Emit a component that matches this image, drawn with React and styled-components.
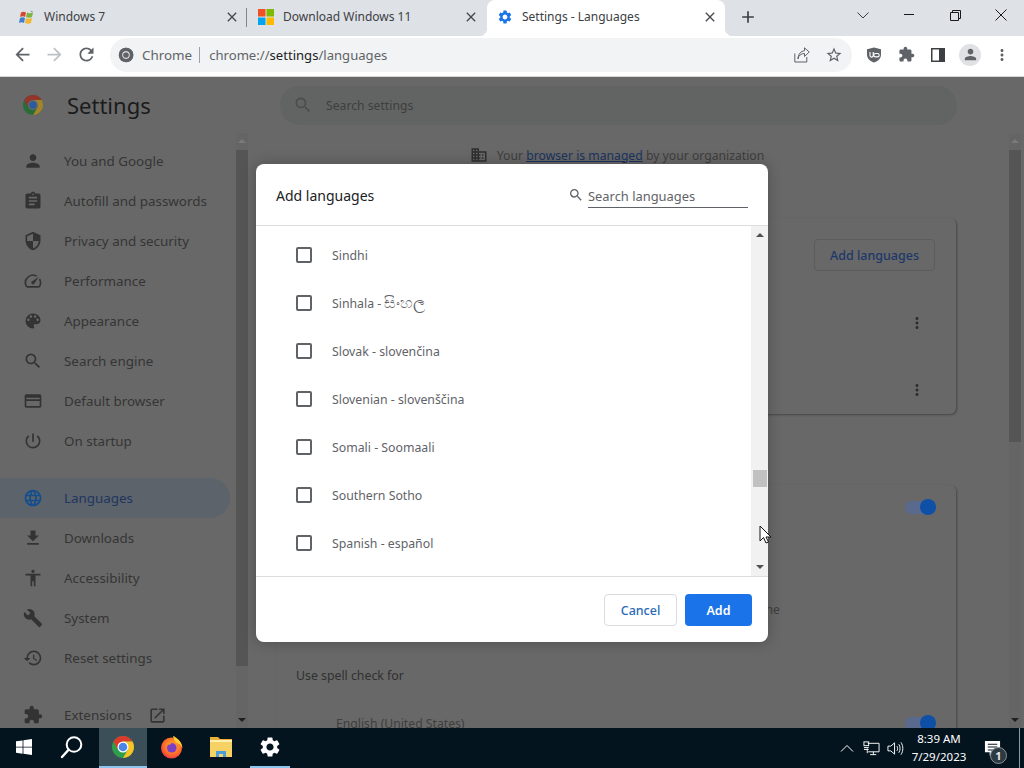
import React from "react";
import styled, { createGlobalStyle } from "styled-components";

const FONT = `"Noto Sans", "Open Sans", "Liberation Sans", sans-serif`;

const Global = createGlobalStyle`
  html, body { margin: 0; padding: 0; width: 1024px; height: 768px; overflow: hidden; background: #686868; }
  * { box-sizing: border-box; }
  body { font-family: ${FONT}; }
`;

const P = {
  person: "M12 12c2.21 0 4-1.79 4-4s-1.79-4-4-4-4 1.79-4 4 1.79 4 4 4zm0 2c-2.67 0-8 1.34-8 4v2h16v-2c0-2.66-5.33-4-8-4z",
  assignment: "M19 3h-4.18C14.4 1.84 13.3 1 12 1c-1.3 0-2.4.84-2.82 2H5c-1.1 0-2 .9-2 2v14c0 1.1.9 2 2 2h14c1.1 0 2-.9 2-2V5c0-1.1-.9-2-2-2zm-7 0c.55 0 1 .45 1 1s-.45 1-1 1-1-.45-1-1 .45-1 1-1zm2 14H7v-2h7v2zm3-4H7v-2h10v2zm0-4H7V7h10v2z",
  security: "M12 1L3 5v6c0 5.55 3.84 10.74 9 12 5.16-1.26 9-6.45 9-12V5l-9-4zm0 10.99h7c-.53 4.12-3.28 7.79-7 8.94V12H5V6.3l7-3.11v8.8z",
  speed: "M20.38 8.57l-1.23 1.85a8 8 0 0 1-.22 7.58H5.07A8 8 0 0 1 15.58 6.85l1.85-1.23A10 10 0 0 0 3.35 19a2 2 0 0 0 1.72 1h13.85a2 2 0 0 0 1.74-1 10 10 0 0 0-.27-10.44zm-9.79 6.84a2 2 0 0 0 2.83 0l5.66-8.49-8.49 5.66a2 2 0 0 0 0 2.83z",
  palette: "M12 3a9 9 0 0 0 0 18c.83 0 1.5-.67 1.5-1.5 0-.39-.15-.74-.39-1.01-.23-.26-.38-.61-.38-.99 0-.83.67-1.5 1.5-1.5H16c2.76 0 5-2.24 5-5 0-4.42-4.03-8-9-8zm-5.5 9c-.83 0-1.5-.67-1.5-1.5S5.67 9 6.5 9 8 9.67 8 10.5 7.33 12 6.5 12zm3-4C8.67 8 8 7.33 8 6.5S8.67 5 9.5 5s1.5.67 1.5 1.5S10.33 8 9.5 8zm5 0c-.83 0-1.5-.67-1.5-1.5S13.67 5 14.5 5s1.5.67 1.5 1.5S15.33 8 14.5 8zm3 4c-.83 0-1.5-.67-1.5-1.5S16.67 9 17.5 9s1.5.67 1.5 1.5-.67 1.5-1.5 1.5z",
  search: "M15.5 14h-.79l-.28-.27A6.471 6.471 0 0 0 16 9.5 6.5 6.5 0 1 0 9.5 16c1.61 0 3.09-.59 4.23-1.57l.27.28v.79l5 4.99L20.49 19l-4.99-5zm-6 0C7.01 14 5 11.99 5 9.5S7.01 5 9.5 5 14 7.01 14 9.5 11.99 14 9.5 14z",
  browser: "M20 4H4c-1.1 0-2 .9-2 2v12c0 1.1.9 2 2 2h16c1.1 0 2-.9 2-2V6c0-1.1-.9-2-2-2zm0 14H4v-6h16v6zm0-8H4V8h16v2z",
  power: "M13 3h-2v10h2V3zm4.83 2.17l-1.42 1.42A6.92 6.92 0 0 1 19 12c0 3.87-3.13 7-7 7A6.995 6.995 0 0 1 7.58 6.58L6.17 5.17A8.932 8.932 0 0 0 3 12a9 9 0 0 0 18 0c0-2.74-1.23-5.18-3.17-6.83z",
  language: "M11.99 2C6.47 2 2 6.48 2 12s4.47 10 9.99 10C17.52 22 22 17.52 22 12S17.52 2 11.99 2zm6.93 6h-2.95a15.65 15.65 0 0 0-1.38-3.56A8.03 8.03 0 0 1 18.92 8zM12 4.04c.83 1.2 1.48 2.53 1.91 3.96h-3.82c.43-1.43 1.08-2.76 1.91-3.96zM4.26 14C4.1 13.36 4 12.69 4 12s.1-1.36.26-2h3.38c-.08.66-.14 1.32-.14 2 0 .68.06 1.34.14 2H4.26zm.82 2h2.95c.32 1.25.78 2.45 1.38 3.56A7.987 7.987 0 0 1 5.08 16zm2.95-8H5.08a7.987 7.987 0 0 1 4.33-3.56A15.65 15.65 0 0 0 8.03 8zM12 19.96c-.83-1.2-1.48-2.53-1.91-3.96h3.82c-.43 1.43-1.08 2.76-1.91 3.96zM14.34 14H9.66c-.09-.66-.16-1.32-.16-2 0-.68.07-1.35.16-2h4.68c.09.65.16 1.32.16 2 0 .68-.07 1.34-.16 2zm.25 5.56c.6-1.11 1.06-2.31 1.38-3.56h2.95a8.03 8.03 0 0 1-4.33 3.56zM16.36 14c.08-.66.14-1.32.14-2 0-.68-.06-1.34-.14-2h3.38c.16.64.26 1.31.26 2s-.1 1.36-.26 2h-3.38z",
  download: "M19 9h-4V3H9v6H5l7 7 7-7zM5 18v2h14v-2H5z",
  accessibility: "M12 2c1.1 0 2 .9 2 2s-.9 2-2 2-2-.9-2-2 .9-2 2-2zm9 7h-6v13h-2v-6h-2v6H9V9H3V7h18v2z",
  build: "M22.7 19l-9.1-9.1c.9-2.3.4-5-1.5-6.9-2-2-5-2.4-7.4-1.3L9 6 6 9 1.6 4.7C.4 7.1.9 10.1 2.9 12.1c1.9 1.9 4.6 2.4 6.9 1.5l9.1 9.1c.4.4 1 .4 1.4 0l2.3-2.3c.5-.4.5-1.1.1-1.4z",
  restore: "M13 3a9 9 0 0 0-9 9H1l3.89 3.89.07.14L9 12H6c0-3.87 3.13-7 7-7s7 3.13 7 7-3.13 7-7 7c-1.93 0-3.68-.79-4.94-2.06l-1.42 1.42A8.954 8.954 0 0 0 13 21a9 9 0 0 0 0-18zm-1 5v5l4.28 2.54.72-1.21-3.5-2.08V8H12z",
  extension: "M20.5 11H19V7c0-1.1-.9-2-2-2h-4V3.5C13 2.12 11.88 1 10.5 1S8 2.12 8 3.5V5H4c-1.1 0-1.99.9-1.99 2v3.8H3.5c1.49 0 2.7 1.21 2.7 2.7s-1.21 2.7-2.7 2.7H2V20c0 1.1.9 2 2 2h3.8v-1.5c0-1.49 1.21-2.7 2.7-2.7 1.49 0 2.7 1.21 2.7 2.7V22H17c1.1 0 2-.9 2-2v-4h1.5c1.38 0 2.5-1.12 2.5-2.5S21.88 11 20.5 11z",
  open: "M19 19H5V5h7V3H5a2 2 0 0 0-2 2v14a2 2 0 0 0 2 2h14c1.1 0 2-.9 2-2v-7h-2v7zM14 3v2h3.59l-9.83 9.83 1.41 1.41L19 6.41V10h2V3h-7z",
  business: "M12 7V3H2v18h20V7H12zM6 19H4v-2h2v2zm0-4H4v-2h2v2zm0-4H4V9h2v2zm0-4H4V5h2v2zm4 12H8v-2h2v2zm0-4H8v-2h2v2zm0-4H8V9h2v2zm0-4H8V5h2v2zm10 12h-8v-2h2v-2h-2v-2h2v-2h-2V9h8v10zm-2-8h-2v2h2v-2zm0 4h-2v2h2v-2z",
  gear: "M19.14 12.94c.04-.3.06-.61.06-.94 0-.32-.02-.64-.07-.94l2.03-1.58a.49.49 0 0 0 .12-.61l-1.92-3.32a.488.488 0 0 0-.59-.22l-2.39.96c-.5-.38-1.03-.7-1.62-.94l-.36-2.54a.484.484 0 0 0-.48-.41h-3.84c-.24 0-.43.17-.47.41l-.36 2.54c-.59.24-1.13.57-1.62.94l-2.39-.96c-.22-.08-.47 0-.59.22L2.74 8.87c-.12.21-.08.47.12.61l2.03 1.58c-.05.3-.09.63-.09.94s.02.64.07.94l-2.03 1.58a.49.49 0 0 0-.12.61l1.92 3.32c.12.22.37.29.59.22l2.39-.96c.5.38 1.03.7 1.62.94l.36 2.54c.05.24.24.41.48.41h3.84c.24 0 .44-.17.47-.41l.36-2.54c.59-.24 1.13-.56 1.62-.94l2.39.96c.22.08.47 0 .59-.22l1.92-3.32c.12-.22.07-.47-.12-.61l-2.01-1.58zM12 15.6c-1.98 0-3.6-1.62-3.6-3.6s1.62-3.6 3.6-3.6 3.6 1.62 3.6 3.6-1.62 3.6-3.6 3.6z",
  dots: "M12 8c1.1 0 2-.9 2-2s-.9-2-2-2-2 .9-2 2 .9 2 2 2zm0 2c-1.1 0-2 .9-2 2s.9 2 2 2 2-.9 2-2-.9-2-2-2zm0 6c-1.1 0-2 .9-2 2s.9 2 2 2 2-.9 2-2-.9-2-2-2z",
  back: "M20 11H7.83l5.59-5.59L12 4l-8 8 8 8 1.41-1.41L7.83 13H20v-2z",
  forward: "M12 4l-1.41 1.41L16.17 11H4v2h12.17l-5.58 5.59L12 20l8-8z",
  reload: "M17.65 6.35A7.958 7.958 0 0 0 12 4c-4.42 0-7.99 3.58-7.99 8s3.57 8 7.99 8c3.73 0 6.84-2.55 7.73-6h-2.08A5.99 5.99 0 0 1 12 18c-3.31 0-6-2.69-6-6s2.69-6 6-6c1.66 0 3.14.69 4.22 1.78L13 11h7V4l-2.35 2.35z",
  close: "M19 6.41L17.59 5 12 10.59 6.41 5 5 6.41 10.59 12 5 17.59 6.41 19 12 13.41 17.59 19 19 17.59 13.41 12z",
  plus: "M19 13h-6v6h-2v-6H5v-2h6V5h2v6h6v2z",
  star: "M22 9.24l-7.19-.62L12 2 9.19 8.63 2 9.24l5.46 4.73L5.82 21 12 17.27 18.18 21l-1.63-7.03L22 9.24zM12 15.4l-3.76 2.27 1-4.28-3.32-2.88 4.38-.38L12 6.1l1.71 4.04 4.38.38-3.32 2.88 1 4.28L12 15.4z",
};

const Svg = styled.svg`
  display: block;
  flex: none;
  width: ${(p) => p.$size || 20}px;
  height: ${(p) => p.$size || 20}px;
  fill: ${(p) => p.$color || "#333"};
`;
const Icon = ({ name, size, color }) => (
  <Svg viewBox="0 0 24 24" $size={size} $color={color}><path d={P[name]} /></Svg>
);

const ChromeLogo = ({ size, mono }) => (
  <Svg viewBox="0 0 48 48" $size={size} $color="none">
    <circle cx="24" cy="24" r="22" fill={mono ? "#5f6368" : "#2f9e4a"} />
    <path d="M24 13H43.05A22 22 0 0 0 4.95 13L14 29Z" fill={mono ? "#5f6368" : "#dd3a2e"} />
    <path d="M24 13H43.05A22 22 0 0 1 24 46L34 29Z" fill={mono ? "#5f6368" : "#f7c325"} />
    <circle cx="24" cy="24" r="11" fill="#fff" />
    <circle cx="24" cy="24" r="8.6" fill={mono ? "#5f6368" : "#4a86e8"} />
  </Svg>
);

const DimChromeLogo = () => (
  <Svg viewBox="0 0 48 48" $size={22} $color="none">
    <circle cx="24" cy="24" r="22" fill="#2a6b3a" />
    <path d="M24 13H43.05A22 22 0 0 0 4.95 13L14 29Z" fill="#93352c" />
    <path d="M24 13H43.05A22 22 0 0 1 24 46L34 29Z" fill="#a3842a" />
    <circle cx="24" cy="24" r="11" fill="#6a6a6a" />
    <circle cx="24" cy="24" r="8" fill="#2b5a9e" />
  </Svg>
);

const Root = styled.div`
  width: 1024px;
  height: 768px;
  display: flex;
  flex-direction: column;
  overflow: hidden;
  position: relative;
`;

/* ---------- tab strip ---------- */
const TabStrip = styled.div`
  height: 36px;
  flex: none;
  display: flex;
  background: #dee1e6;
  padding-left: 10px;
`;
const Tab = styled.div`
  position: relative;
  width: ${(p) => p.$w}px;
  padding: 0 ${(p) => p.$padR}px 3px ${(p) => p.$pad}px;
  display: flex;
  align-items: center;
  gap: 9px;
  background: ${(p) => (p.$active ? "#fff" : "transparent")};
  border-radius: 8px 8px 0 0;
  ${(p) =>
    p.$active &&
    `
    &::before, &::after { content: ""; position: absolute; bottom: 0; width: 8px; height: 8px; }
    &::before { left: -8px; background: radial-gradient(circle at 0 0, transparent 8px, #fff 8.5px); }
    &::after { right: -8px; background: radial-gradient(circle at 100% 0, transparent 8px, #fff 8.5px); }
  `}
`;
const TabSep = styled.div`
  position: absolute;
  right: 0;
  top: 8px;
  height: 19px;
  width: 1px;
  background: #80868b;
`;
const TabTitle = styled.span`
  flex: 1;
  font-size: 12px;
  color: #3c4043;
  white-space: nowrap;
`;
const NewTab = styled.div`
  width: 28px;
  height: 34px;
  margin-left: 9px;
  display: flex;
  align-items: center;
  justify-content: center;
`;
const Spacer = styled.div`
  flex: 1;
`;
const WinButton = styled.div`
  width: 46px;
  height: 30px;
  display: flex;
  align-items: center;
  justify-content: center;
`;

/* ---------- toolbar ---------- */
const Toolbar = styled.div`
  height: 41px;
  flex: none;
  display: flex;
  align-items: center;
  background: #fff;
  padding: 0 6px 3px;
  border-bottom: 1px solid #d5d6d8;
`;
const ToolButton = styled.div`
  width: 32px;
  height: 32px;
  flex: none;
  display: flex;
  align-items: center;
  justify-content: center;
`;
const Omnibox = styled.div`
  flex: 1;
  height: 34px;
  margin: 0 6px 0 8px;
  padding: 0 2px 0 8px;
  border-radius: 17px;
  background: #f1f3f4;
  display: flex;
  align-items: center;
`;
const Origin = styled.span`
  margin-left: 8px;
  font-size: 13.4px;
  color: #5f6368;
`;
const OmniDivider = styled.span`
  width: 1px;
  height: 16px;
  background: #9aa0a6;
  margin: 0 9px 0 7px;
`;
const Url = styled.span`
  flex: 1;
  font-size: 13.1px;
  color: #5f6368;
  b { font-weight: 400; color: #202124; }
`;
const Avatar = styled.div`
  width: 22px;
  height: 22px;
  border-radius: 50%;
  background: #dfe1e5;
  display: flex;
  align-items: center;
  justify-content: center;
`;

/* ---------- dimmed settings page ---------- */
const Page = styled.div`
  flex: 1;
  min-height: 0;
  position: relative;
  display: flex;
  flex-direction: column;
  background: #686868;
  overflow: hidden;
`;
const Header = styled.div`
  height: 56px;
  flex: none;
  display: flex;
  align-items: center;
  padding-left: 22px;
`;
const HeaderTitle = styled.div`
  width: 213px;
  margin-left: 23px;
  font-size: 22px;
  color: #1b1b1b;
  line-height: 1;
`;
const SearchBar = styled.div`
  width: 677px;
  height: 39px;
  border-radius: 20px;
  background: #626464;
  display: flex;
  align-items: center;
  padding-left: 13px;
  gap: 13px;
  font-size: 12.2px;
  color: #3e3e3e;
`;
const Body = styled.div`
  flex: 1;
  min-height: 0;
  display: flex;
`;
const Sidebar = styled.nav`
  width: 236px;
  flex: none;
  padding-top: 8px;
`;
const NavGroup = styled.div`
  margin-bottom: 17px;
`;
const NavItem = styled.div`
  height: 40px;
  width: 230px;
  display: flex;
  align-items: center;
  padding-left: 23px;
  gap: 21px;
  font-size: 13.4px;
  white-space: nowrap;
  color: ${(p) => (p.$active ? "#1d3660" : "#353535")};
  background: ${(p) => (p.$active ? "#5d636b" : "transparent")};
  border-radius: 0 20px 20px 0;
`;
const NavExternal = styled.span`
  margin-left: -5px;
  display: flex;
`;
const Scrollbar = styled.div`
  width: ${(p) => p.$w}px;
  flex: none;
  display: flex;
  flex-direction: column;
  align-items: center;
  padding-top: ${(p) => p.$top}px;
  background: ${(p) => p.$bg || "#656565"};
`;
const ScrollGutter = styled.div`
  width: 3px;
  flex: none;
`;
const ArrowUp = styled.div`
  width: 0;
  height: 0;
  border-left: 4px solid transparent;
  border-right: 4px solid transparent;
  border-bottom: 4px solid ${(p) => p.$c};
`;
const ArrowDown = styled.div`
  width: 0;
  height: 0;
  border-left: 4px solid transparent;
  border-right: 4px solid transparent;
  border-top: 4px solid ${(p) => p.$c};
  margin-top: auto;
  margin-bottom: ${(p) => p.$mb}px;
`;
const Thumb = styled.div`
  width: ${(p) => (p.$w ? `${p.$w}px` : "100%")};
  margin-top: ${(p) => p.$gap}px;
  height: ${(p) => p.$h}px;
  background: ${(p) => p.$c};
`;
const Main = styled.main`
  flex: 1;
  min-width: 0;
  padding-left: 28px;
  overflow: hidden;
`;
const Column = styled.div`
  width: 680px;
`;
const Managed = styled.div`
  height: 44px;
  display: flex;
  align-items: center;
  justify-content: center;
  padding-left: 2px;
  gap: 9px;
  font-size: 12.2px;
  color: #3e3e3e;
  a { color: #1b335f; text-decoration: underline; }
`;
const Card = styled.section`
  margin-top: ${(p) => p.$mt}px;
  height: ${(p) => p.$h}px;
  border-radius: 6px;
  background: #686868;
  box-shadow: 1px 1px 2px rgba(30, 30, 30, 0.45);
`;
const CardTop = styled.div`
  display: flex;
  justify-content: flex-end;
  padding: 21px 21px 18px 0;
`;
const OutlineButton = styled.div`
  width: 121px;
  height: 32px;
  border: 1px solid #5c5c5c;
  border-radius: 4px;
  display: flex;
  align-items: center;
  justify-content: center;
  font-size: 12.5px;
  font-weight: 500;
  color: #1d3868;
`;
const MenuRow = styled.div`
  height: 67px;
  display: flex;
  align-items: center;
  justify-content: flex-end;
  padding-right: 30px;
`;
const ToggleRow = styled.div`
  height: 44px;
  margin-top: ${(p) => p.$mt || 0}px;
  padding: 0 20px 0 ${(p) => p.$pl || 20}px;
  display: flex;
  align-items: center;
  font-size: 12.2px;
  color: #3e3e3e;
`;
const Track = styled.div`
  margin-left: auto;
  position: relative;
  width: 31px;
  height: 13px;
`;
const TrackBar = styled.div`
  width: 25px;
  height: 13px;
  border-radius: 7px;
  background: #5a6a8e;
`;
const Knob = styled.div`
  position: absolute;
  right: 0;
  top: -2px;
  width: 16px;
  height: 16px;
  border-radius: 50%;
  background: #0e50a6;
`;
const PeekLine = styled.div`
  margin-top: 71px;
  width: 504px;
  height: 20px;
  line-height: 20px;
  text-align: right;
  white-space: nowrap;
  font-size: 12.3px;
  color: #3e3e3e;
`;
const SpellLabel = styled.div`
  margin-top: 46px;
  padding-left: 20px;
  height: 20px;
  line-height: 20px;
  font-size: 12.3px;
  color: #303030;
`;

/* ---------- dialog ---------- */
const Dialog = styled.div`
  position: absolute;
  left: 256px;
  top: 87px;
  width: 512px;
  height: 478px;
  background: #fff;
  border-radius: 8px;
  box-shadow: 0 0 14px rgba(0, 0, 0, 0.25);
  display: flex;
  flex-direction: column;
  overflow: hidden;
`;
const DialogHead = styled.div`
  height: 62px;
  flex: none;
  display: flex;
  align-items: center;
  padding: 1px 20px 0;
  border-bottom: 1px solid #dadce0;
`;
const DialogTitle = styled.div`
  flex: 1;
  font-size: 14px;
  color: #202124;
`;
const DialogSearch = styled.div`
  display: flex;
  align-items: center;
  gap: 4px;
`;
const SearchField = styled.div`
  width: 160px;
  height: 23px;
  margin-top: 2px;
  line-height: 23px;
  border-bottom: 1px solid #5f6368;
  font-size: 12.9px;
  color: #5f6368;
`;
const DialogBody = styled.div`
  flex: 1;
  min-height: 0;
  display: flex;
`;
const LangList = styled.ul`
  flex: 1;
  margin: 0;
  padding: 5px 0 0 40px;
  list-style: none;
  overflow: hidden;
`;
const LangRow = styled.li`
  height: 48px;
  display: flex;
  align-items: center;
  gap: 20px;
  font-size: 12.3px;
  color: #5f6368;
`;
const Native = styled.span`
  font-size: 15.5px;
  line-height: 1;
`;
const Check = styled.span`
  width: 16px;
  height: 16px;
  flex: none;
  border: 2px solid #5f6368;
  border-radius: 2px;
`;
const DialogFoot = styled.div`
  height: 66px;
  flex: none;
  border-top: 1px solid #dadce0;
  display: flex;
  justify-content: flex-end;
  align-items: flex-start;
  gap: 8px;
  padding: 17px 16px 0 0;
`;
const DialogButton = styled.div`
  height: 32px;
  width: ${(p) => p.$w}px;
  border-radius: 4px;
  display: flex;
  align-items: center;
  justify-content: center;
  font-size: 12.5px;
  font-weight: ${(p) => (p.$primary ? 600 : 500)};
  color: ${(p) => (p.$primary ? "#fff" : "#2a6ab8")};
  background: ${(p) => (p.$primary ? "#1a73e8" : "#fff")};
  border: ${(p) => (p.$primary ? "none" : "1px solid #dadce0")};
`;
const Cursor = styled.svg`
  position: absolute;
  left: 759px;
  top: 525px;
  width: 13px;
  height: 20px;
`;

/* ---------- taskbar ---------- */
const Taskbar = styled.footer`
  height: 40px;
  flex: none;
  display: flex;
  align-items: stretch;
  background: #04141f;
`;
const TaskItem = styled.div`
  width: ${(p) => p.$w || 48}px;
  margin-left: ${(p) => p.$ml || 0}px;
  padding-right: ${(p) => p.$pr || 0}px;
  display: flex;
  align-items: center;
  justify-content: center;
  background: ${(p) => (p.$hi ? "#3a4f58" : "transparent")};
  border-bottom: 2px solid ${(p) => (p.$line ? "#8cc5ee" : "transparent")};
`;
const Tray = styled.div`
  margin-left: auto;
  display: flex;
  align-items: center;
  padding-right: 4px;
`;
const TrayIcon = styled.div`
  width: 24px;
  display: flex;
  justify-content: center;
`;
const Clock = styled.div`
  width: 64px;
  text-align: center;
  font-size: 11.5px;
  line-height: 18px;
  color: #fff;
  white-space: nowrap;
`;
const Notify = styled.div`
  position: relative;
  width: 30px;
  margin-left: 6px;
  margin-right: 12px;
  display: flex;
  justify-content: center;
`;
const Badge = styled.span`
  position: absolute;
  right: 0;
  top: 7px;
  width: 17px;
  height: 17px;
  border-radius: 50%;
  background: #2e3a42;
  border: 1px solid #8a9297;
  color: #e8e8e8;
  font-size: 11px;
  font-weight: 700;
  line-height: 15px;
  text-align: center;
`;
const EdgeLine = styled.div`
  width: 1px;
  height: 40px;
  background: #8a99a3;
`;

const NAV_A = [
  ["person", "You and Google"],
  ["assignment", "Autofill and passwords"],
  ["security", "Privacy and security"],
  ["speed", "Performance"],
  ["palette", "Appearance"],
  ["search", "Search engine"],
  ["browser", "Default browser"],
  ["power", "On startup"],
];
const NAV_B = [
  ["language", "Languages", true],
  ["download", "Downloads"],
  ["accessibility", "Accessibility"],
  ["build", "System"],
  ["restore", "Reset settings"],
];
const LANGS = [
  ["Sindhi"],
  ["Sinhala - ", "සිංහල"],
  ["Slovak - slovenčina"],
  ["Slovenian - slovenščina"],
  ["Somali - Soomaali"],
  ["Southern Sotho"],
  ["Spanish - español"],
];

const Win7Icon = () => (
  <Svg viewBox="0 0 16 16" $size={16} $color="none">
    <path d="M2 3.5c2-1.2 3.5-1 5 0L6 8C4.500 7 3 7 1 8z" fill="#d9472b" />
    <path d="M8 3.500c2 1 3.500 1 6 0L13 8c-2 1-3.500 1-6 0z" fill="#7cb342" />
    <path d="M1 9c2-1 3.500-1 5 0L5 14c-1.500-1-3-1-5 0z" fill="#3f7fd0" />
    <path d="M7 9c2 1 3.500 1 6 0l-1 5c-2 1-3.500 1-6 0z" fill="#f2b632" />
    <path d="M11 1.500l3 1-1 1z" fill="#8a8a8a" />
  </Svg>
);
const MsIcon = () => (
  <Svg viewBox="0 0 16 16" $size={16} $color="none">
    <rect width="7.500" height="7.500" fill="#f25022" />
    <rect x="8.500" width="7.500" height="7.500" fill="#7fba00" />
    <rect y="8.500" width="7.500" height="7.500" fill="#00a4ef" />
    <rect x="8.500" y="8.500" width="7.500" height="7.500" fill="#ffb900" />
  </Svg>
);
const ShareIcon = () => (
  <Svg viewBox="0 0 16 16" $size={16} $color="none">
    <path d="M.8 6.500v8.500h12V10" stroke="#5f6368" strokeWidth="1" fill="none" />
    <path d="M4 12c.4-3.500 3-5.500 6.500-5.500V9.500L15.200 5 10.500.8v3C7 4 4 7 4 12z" stroke="#5f6368" strokeWidth="1" fill="none" strokeLinejoin="round" />
  </Svg>
);
const UBlockIcon = () => (
  <Svg viewBox="0 0 16 16" $size={16} $color="none">
    <path d="M8 .5l7 1.800v5.200c0 4-3 6.800-7 8-4-1.200-7-4-7-8V2.300z" fill="#5f6368" />
    <path d="M4 5v3.500a1.600 1.600 0 0 0 3.200 0V5M9 6.500h2.500a1.700 1.700 0 0 1 0 3.400H9.500a1.700 1.700 0 0 1 0-3.400z" stroke="#fff" strokeWidth="1.100" fill="none" />
  </Svg>
);
const PanelIcon = () => (
  <Svg viewBox="0 0 16 16" $size={16} $color="none">
    <rect x="1" y="1" width="14" height="14" fill="#3c4043" />
    <rect x="2.500" y="2.500" width="6.500" height="11" fill="#fff" />
  </Svg>
);
const WindowsLogo = () => (
  <Svg viewBox="0 0 16 16" $size={16} $color="#fff">
    <path d="M0 2.300l6.600-.9v6.300H0zM7.400 1.300L16 0v7.700H7.400zM0 8.400h6.600v6.300L0 13.800zM7.400 8.400H16V16l-8.600-1.200z" />
  </Svg>
);
const SearchGlass = () => (
  <Svg viewBox="0 0 24 24" $size={24} $color="none">
    <circle cx="14" cy="9.500" r="7.300" stroke="#fff" strokeWidth="2" />
    <path d="M8.600 14.800L2 22" stroke="#fff" strokeWidth="2.400" strokeLinecap="round" />
  </Svg>
);
const Firefox = () => (
  <Svg viewBox="0 0 24 24" $size={24} $color="none">
    <defs>
      <radialGradient id="ffx" cx="0.55" cy="0.4" r="0.7">
        <stop offset="0" stopColor="#ffb224" />
        <stop offset="0.6" stopColor="#ff6a2b" />
        <stop offset="1" stopColor="#e3244f" />
      </radialGradient>
    </defs>
    <circle cx="11.500" cy="13" r="10.500" fill="url(#ffx)" />
    <path d="M13 .8c5 2.500 9 6.500 9.500 12.500-1.500-3-3.500-5-6.500-5.500C14.500 5.500 13.500 3.500 13 .8z" fill="#ffcb30" />
    <circle cx="11.800" cy="12.800" r="4.800" fill="#7b3fc4" />
    <path d="M6.500 9c2-2.500 5-3 7.500-2-2 .5-3.500 1.500-4 3z" fill="#ff8a2a" />
  </Svg>
);
const Folder = () => (
  <Svg viewBox="0 0 24 24" $size={24} $color="none">
    <path d="M1 2h8l2 2h12v5H1z" fill="#e8b13a" />
    <rect x="1" y="6" width="22" height="16" fill="#f6d264" />
    <rect x="1" y="5" width="22" height="2" fill="#fff0b0" />
    <path d="M7 22v-6h10v6h-3v-3h-4v3z" fill="#4a9fd8" />
  </Svg>
);
const Network = () => (
  <Svg viewBox="0 0 18 16" $size={17} $color="none">
    <g stroke="#fff" strokeWidth="1" fill="none">
      <path d="M5 2.500h12v9H5.500M4.500 8v5M11 11.500v3M7.500 14.500H14" />
      <rect x="1" y="1" width="5" height="4" />
      <path d="M1 7h5M1 9h5" />
    </g>
  </Svg>
);
const Speaker = () => (
  <Svg viewBox="0 0 18 16" $size={17} $color="none">
    <g stroke="#fff" strokeWidth="1" fill="none">
      <path d="M1 5.500h3L8 2v12l-4-3.500H1z" />
      <path d="M10.500 5.500c1 1.500 1 3.500 0 5M12.500 3.500c1.800 2.500 1.800 6.500 0 9M14.800 1.500c2.600 3.800 2.600 9.200 0 13" />
    </g>
  </Svg>
);
const Bubble = () => (
  <Svg viewBox="0 0 18 18" $size={17} $color="#fff">
    <path d="M1 1h16v12h-7l-4 4v-4H1zM4 4v1h10V4zm0 3v1h10V7zm0 3v1h7v-1z" fillRule="evenodd" />
  </Svg>
);

export default function App() {
  return (
    <Root>
      <Global />
      <TabStrip>
        <Tab $w={237} $pad={9} $padR={7}>
          <Win7Icon />
          <TabTitle>Windows 7</TabTitle>
          <Icon name="close" size={16} color="#45494d" />
          <TabSep />
        </Tab>
        <Tab $w={240} $pad={11} $padR={8}>
          <MsIcon />
          <TabTitle>Download Windows 11</TabTitle>
          <Icon name="close" size={16} color="#45494d" />
        </Tab>
        <Tab $w={238} $pad={10} $padR={7} $active>
          <Icon name="gear" size={16} color="#1a73e8" />
          <TabTitle>Settings - Languages</TabTitle>
          <Icon name="close" size={16} color="#45494d" />
        </Tab>
        <NewTab>
          <Icon name="plus" size={20} color="#3c4043" />
        </NewTab>
        <Spacer />
        <WinButton>
          <svg width="12" height="7" viewBox="0 0 12 7"><path d="M.5.5L6 6 11.500.5" fill="none" stroke="#3c4043" /></svg>
        </WinButton>
        <WinButton>
          <svg width="10" height="2" viewBox="0 0 10 2"><path d="M0 .5h10" stroke="#1a1a1a" /></svg>
        </WinButton>
        <WinButton>
          <svg width="11" height="11" viewBox="0 0 11 11"><path d="M2.500 2.500V.5h8v8h-2M.5 2.500h8v8h-8z" fill="none" stroke="#1a1a1a" /></svg>
        </WinButton>
        <WinButton>
          <svg width="12" height="12" viewBox="0 0 12 12"><path d="M.5.5l11 11M11.500.5l-11 11" stroke="#1a1a1a" /></svg>
        </WinButton>
      </TabStrip>

      <Toolbar>
        <ToolButton><Icon name="back" size={21} color="#5f6368" /></ToolButton>
        <ToolButton><Icon name="forward" size={21} color="#bdc1c6" /></ToolButton>
        <ToolButton><Icon name="reload" size={21} color="#5f6368" /></ToolButton>
        <Omnibox>
          <ChromeLogo size={16} mono />
          <Origin>Chrome</Origin>
          <OmniDivider />
          <Url>chrome://<b>settings</b>/languages</Url>
          <ToolButton><ShareIcon /></ToolButton>
          <ToolButton><Icon name="star" size={18} color="#5f6368" /></ToolButton>
        </Omnibox>
        <ToolButton><UBlockIcon /></ToolButton>
        <ToolButton><Icon name="extension" size={17} color="#5f6368" /></ToolButton>
        <ToolButton><PanelIcon /></ToolButton>
        <ToolButton>
          <Avatar><Icon name="person" size={17} color="#5f6368" /></Avatar>
        </ToolButton>
        <ToolButton><Icon name="dots" size={18} color="#5f6368" /></ToolButton>
      </Toolbar>

      <Page>
        <Header>
          <DimChromeLogo />
          <HeaderTitle>Settings</HeaderTitle>
          <SearchBar>
            <Icon name="search" size={20} color="#4b4d4d" />
            Search settings
          </SearchBar>
        </Header>
        <Body>
          <Sidebar>
            <NavGroup>
              {NAV_A.map(([ic, label]) => (
                <NavItem key={label}>
                  <Icon name={ic} size={20} color="#333" />
                  {label}
                </NavItem>
              ))}
            </NavGroup>
            <NavGroup>
              {NAV_B.map(([ic, label, active]) => (
                <NavItem key={label} $active={active}>
                  <Icon name={ic} size={20} color={active ? "#124d8d" : "#333"} />
                  {label}
                </NavItem>
              ))}
            </NavGroup>
            <NavItem>
              <Icon name="extension" size={20} color="#333" />
              Extensions
              <NavExternal><Icon name="open" size={19} color="#333" /></NavExternal>
            </NavItem>
          </Sidebar>
          <Scrollbar $w={12} $top={6}>
            <ArrowUp $c="#7a7a7a" />
            <Thumb $gap={7} $h={516} $c="#555" />
            <ArrowDown $c="#1f1f1f" $mb={6} />
          </Scrollbar>
          <Main>
            <Column>
              <Managed>
                <Icon name="business" size={18} color="#2e2e2e" />
                <span>Your <a>browser is managed</a> by your organization</span>
              </Managed>
              <Card $mt={41} $h={196}>
                <CardTop><OutlineButton>Add languages</OutlineButton></CardTop>
                <MenuRow><Icon name="dots" size={18} color="#2e2e2e" /></MenuRow>
                <MenuRow><Icon name="dots" size={18} color="#2e2e2e" /></MenuRow>
              </Card>
              <Card $mt={71} $h={400}>
                <ToggleRow>
                  <Track><TrackBar /><Knob /></Track>
                </ToggleRow>
                <PeekLine>ne</PeekLine>
                <SpellLabel>Use spell check for</SpellLabel>
                <ToggleRow $mt={15} $pl={60}>
                  English (United States)
                  <Track><TrackBar /><Knob /></Track>
                </ToggleRow>
              </Card>
            </Column>
          </Main>
          <Scrollbar $w={12} $top={6}>
            <ArrowUp $c="#7a7a7a" />
            <Thumb $gap={7} $h={292} $c="#555" />
            <ArrowDown $c="#1f1f1f" $mb={6} />
          </Scrollbar>
          <ScrollGutter />
        </Body>

        <Dialog>
          <DialogHead>
            <DialogTitle>Add languages</DialogTitle>
            <DialogSearch>
              <Icon name="search" size={16} color="#5f6368" />
              <SearchField>Search languages</SearchField>
            </DialogSearch>
          </DialogHead>
          <DialogBody>
            <LangList>
              {LANGS.map(([l, native]) => (
                <LangRow key={l}>
                  <Check />
                  <span>{l}{native && <Native>{native}</Native>}</span>
                </LangRow>
              ))}
            </LangList>
            <Scrollbar $w={17} $top={7} $bg="#f1f1f1">
              <ArrowUp $c="#505050" />
              <Thumb $gap={233} $h={17} $w={14} $c="#c1c1c1" />
              <ArrowDown $c="#505050" $mb={7} />
            </Scrollbar>
          </DialogBody>
          <DialogFoot>
            <DialogButton $w={73}>Cancel</DialogButton>
            <DialogButton $w={67} $primary>Add</DialogButton>
          </DialogFoot>
        </Dialog>
      </Page>

      <Taskbar>
        <TaskItem><WindowsLogo /></TaskItem>
        <TaskItem $w={51} $pr={3}><SearchGlass /></TaskItem>
        <TaskItem $hi $line><ChromeLogo size={24} /></TaskItem>
        <TaskItem $w={49}><Firefox /></TaskItem>
        <TaskItem $w={49}><Folder /></TaskItem>
        <TaskItem $w={40} $ml={5} $line><Icon name="gear" size={24} color="#fff" /></TaskItem>
        <Tray>
          <TrayIcon>
            <svg width="14" height="8" viewBox="0 0 14 8"><path d="M1 7.500l6-6 6 6" fill="none" stroke="#fff" /></svg>
          </TrayIcon>
          <TrayIcon><Network /></TrayIcon>
          <TrayIcon><Speaker /></TrayIcon>
          <Clock>8:39 AM<br />7/29/2023</Clock>
          <Notify><Bubble /><Badge>1</Badge></Notify>
          <EdgeLine />
        </Tray>
      </Taskbar>

      <Cursor viewBox="0 0 13 20">
        <path d="M1 1v15l3.500-3.500L7 18l2.500-1-2.500-5h5z" fill="#fff" stroke="#111" strokeWidth="1" />
      </Cursor>
    </Root>
  );
}
